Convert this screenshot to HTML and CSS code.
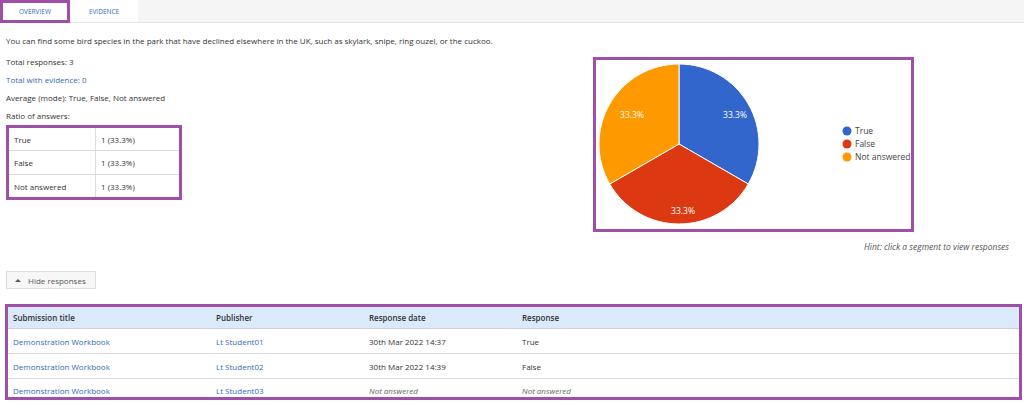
FILE: index.html
```html
<!DOCTYPE html>
<html>
<head>
<meta charset="utf-8">
<link rel="stylesheet" href="styles.css">
</head>
<body>
<div class="tabs">
  <div class="tab tab-active">OVERVIEW</div>
  <div class="tab">EVIDENCE</div>
</div>
<div class="content">
  <p class="question">You can find some bird species in the park that have declined elsewhere in the UK, such as skylark, snipe, ring ouzel, or the cuckoo.</p>
  <div class="summary">
    <div class="stats">
      <p class="stat">Total responses: 3</p>
      <p class="stat link">Total with evidence: 0</p>
      <p class="stat">Average (mode): True, False, Not answered</p>
      <p class="stat">Ratio of answers:</p>
      <table class="ratio">
        <tr><td class="c1">True</td><td>1 (33.3%)</td></tr>
        <tr><td class="c1">False</td><td>1 (33.3%)</td></tr>
        <tr><td class="c1">Not answered</td><td>1 (33.3%)</td></tr>
      </table>
    </div>
    <div class="chart-col">
      <div class="chart">
        <svg width="315" height="169" viewBox="0 0 315 169">
          <path d="M83,84 L83,4 A80,80 0 0 1 152.28,124 Z" fill="#3366cc" stroke="#fff" stroke-width="1"/>
          <path d="M83,84 L152.28,124 A80,80 0 0 1 13.72,124 Z" fill="#dc3912" stroke="#fff" stroke-width="1"/>
          <path d="M83,84 L13.72,124 A80,80 0 0 1 83,4 Z" fill="#ff9900" stroke="#fff" stroke-width="1"/>
          <text class="plabel" x="139" y="58" text-anchor="middle">33.3%</text>
          <text class="plabel" x="36" y="58" text-anchor="middle">33.3%</text>
          <text class="plabel" x="87" y="154" text-anchor="middle">33.3%</text>
          <circle cx="251" cy="71" r="4.5" fill="#3366cc"/>
          <circle cx="251" cy="84" r="4.5" fill="#dc3912"/>
          <circle cx="251" cy="97" r="4.5" fill="#ff9900"/>
          <text class="legend" x="259" y="74">True</text>
          <text class="legend" x="259" y="87">False</text>
          <text class="legend" x="259" y="100">Not answered</text>
        </svg>
      </div>
      <p class="hint">Hint: click a segment to view responses</p>
    </div>
  </div>
  <button class="toggle"><span class="caret"></span>Hide responses</button>
</div>
<table class="responses">
  <thead>
    <tr><th class="w1">Submission title</th><th class="w2">Publisher</th><th class="w3">Response date</th><th>Response</th></tr>
  </thead>
  <tbody>
    <tr><td class="link">Demonstration Workbook</td><td class="link">Lt Student01</td><td>30th Mar 2022 14:37</td><td>True</td></tr>
    <tr><td class="link">Demonstration Workbook</td><td class="link">Lt Student02</td><td>30th Mar 2022 14:39</td><td>False</td></tr>
    <tr class="last"><td class="link">Demonstration Workbook</td><td class="link">Lt Student03</td><td class="na">Not answered</td><td class="na">Not answered</td></tr>
  </tbody>
</table>
</body>
</html>
```
FILE: styles.css
```css
html, body {
  margin: 0;
  padding: 0;
  background: #fff;
}
body {
  font-family: "Open Sans", "Noto Sans", sans-serif;
  font-size: 8px;
  color: #333;
  width: 1024px;
  height: 403px;
  overflow: hidden;
}
p { margin: 0; }
.tabs {
  display: flex;
  height: 22px;
  background: #f5f5f5;
  border-bottom: 1px solid #e4e4e4;
}
.tab {
  width: 68px;
  background: #fff;
  color: #2f6db5;
  font-size: 6.5px;
  display: flex;
  align-items: center;
  justify-content: center;
  box-sizing: border-box;
}
.tab-active {
  width: 70px;
  border: 3px solid #a04fa8;
  height: 23px;
}
.content {
  padding: 0 0 0 6px;
}
.question {
  margin-top: 12px;
  line-height: 12px;
}
.summary {
  display: flex;
  justify-content: space-between;
  margin-top: 10px;
}
.stats {
  display: flex;
  flex-direction: column;
  margin-top: -1px;
}
.stat {
  line-height: 12px;
  margin-bottom: 6px;
}
.link { color: #2f6db5; }
.ratio {
  border-collapse: collapse;
  border: 3px solid #a04fa8;
  width: 176px;
  margin-top: -3px;
}
.ratio td {
  border: 1px solid #ddd;
  height: 24px;
  padding: 0 5px;
  box-sizing: border-box;
}
.ratio td.c1 { width: 88px; }
.chart-col {
  width: 416px;
  padding-right: 15px;
  display: flex;
  flex-direction: column;
  align-items: flex-start;
}
.chart {
  width: 321px;
  height: 175px;
  box-sizing: border-box;
  border: 3px solid #a04fa8;
  display: flex;
}
.plabel {
  fill: #fff;
  font-size: 8.5px;
  font-family: "Open Sans", sans-serif;
}
.legend {
  fill: #444;
  font-size: 8.5px;
  font-family: "Open Sans", sans-serif;
}
.hint {
  align-self: flex-end;
  font-style: italic;
  color: #555;
  font-size: 8.5px;
  line-height: 12px;
  margin-top: 9px;
}
.toggle {
  margin-top: 18px;
  height: 18px;
  width: 90px;
  border: 1px solid #ddd;
  background: #f7f7f7;
  color: #555;
  font-family: "Open Sans", sans-serif;
  font-size: 8px;
  display: flex;
  align-items: center;
  padding: 0 0 0 8px;
  gap: 7px;
}
.caret {
  width: 0;
  height: 0;
  border-left: 3px solid transparent;
  border-right: 3px solid transparent;
  border-bottom: 3px solid #555;
}
.responses {
  margin: 15px 2px 0 5px;
  width: 1017px;
  border-collapse: collapse;
  border: 3px solid #a04fa8;
}
.responses th {
  background: #dbeafb;
  text-align: left;
  font-weight: 600;
  height: 21px;
  padding: 0 5px;
  border-bottom: 1px solid #ccd;
}
.responses td {
  height: 24px;
  padding: 0 5px;
  border-bottom: 1px solid #ddd;
}
.responses tr.last td {
  height: 20px;
  padding-top: 5px;
  border-bottom: none;
  box-sizing: border-box;
}
.responses .w1 { width: 193px; }
.responses .w2 { width: 143px; }
.responses .w3 { width: 143px; }
.responses td.na {
  font-style: italic;
  color: #666;
}
```
